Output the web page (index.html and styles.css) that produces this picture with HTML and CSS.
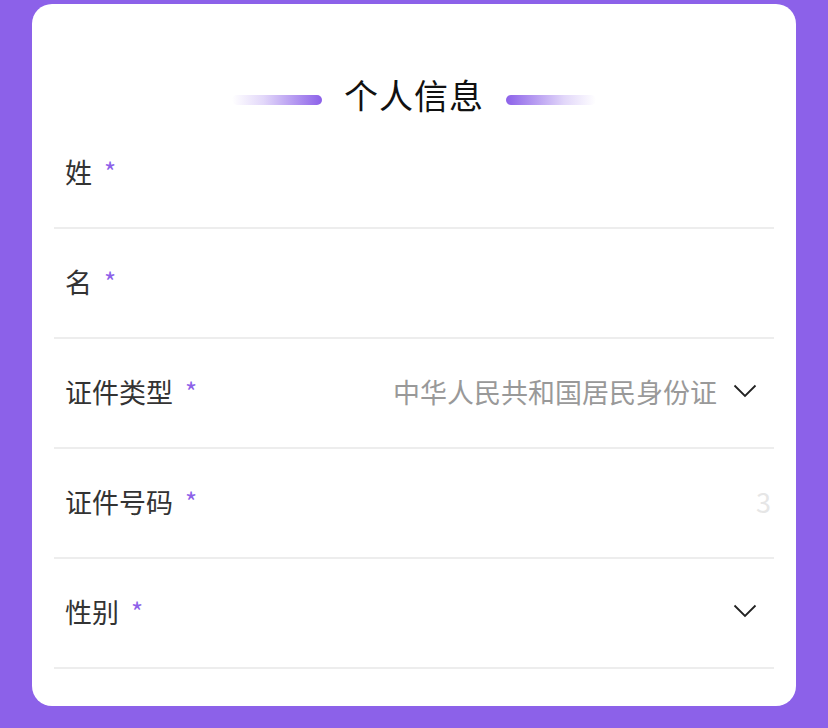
FILE: index.html
```html
<!DOCTYPE html>
<html lang="zh-CN">
<head>
  <meta charset="UTF-8" />
  <meta name="viewport" content="width=device-width, initial-scale=1.0"/>
  <title>个人信息</title>
  <link rel="stylesheet" href="styles.css">
</head>
<body>
  <div class="card">
    <!-- Section title -->
    <div class="title">
      <span class="line line-left"></span>
      <h2>个人信息</h2>
      <span class="line line-right"></span>
    </div>

    <div class="row">
      <span class="label">姓</span><span class="req">*</span>
    </div>

    <div class="row">
      <span class="label">名</span><span class="req">*</span>
    </div>

    <div class="row">
      <span class="label">证件类型</span><span class="req">*</span>
      <span class="value">中华人民共和国居民身份证</span>
      <svg class="arrow" width="24" height="14" viewBox="0 0 24 14">
        <polyline points="1.5,1.5 12,12 22.5,1.5" fill="none" stroke="#222" stroke-width="1.8"/>
      </svg>
    </div>

    <div class="row">
      <span class="label">证件号码</span><span class="req">*</span>
      <span class="value ghost">3</span>
    </div>

    <div class="row">
      <span class="label">性别</span><span class="req">*</span>
      <span class="value"></span>
      <svg class="arrow" width="24" height="14" viewBox="0 0 24 14">
        <polyline points="1.5,1.5 12,12 22.5,1.5" fill="none" stroke="#222" stroke-width="1.8"/>
      </svg>
    </div>
  </div>
</body>
</html>
```

FILE: styles.css
```css
body {
  margin: 0;
  height: 728px;
  background: #8c61e9;
  font-family: "Noto Sans CJK SC", "Noto Sans", sans-serif;
  padding: 4px 32px 0;
  box-sizing: border-box;
}

.card {
  background: #fff;
  border-radius: 20px;
  height: 702px;
  padding: 0 22px;
  box-sizing: border-box;
  overflow: hidden;
}

.title {
  display: flex;
  justify-content: center;
  align-items: center;
  gap: 22px;
  padding-top: 70px;
  height: 42px;
  margin-bottom: 3px;
}

.title h2 {
  margin: 0;
  font-size: 34px;
  font-weight: 400;
  line-height: 42px;
  color: #111;
  letter-spacing: 1px;
}

.line {
  width: 90px;
  height: 10px;
  border-radius: 5px;
  position: relative;
  top: 5px;
}

.line-left {
  background: linear-gradient(to right, rgba(140, 97, 233, 0) 0%, rgba(140, 97, 233, 0.25) 35%, #8c61e9 100%);
}

.line-right {
  background: linear-gradient(to left, rgba(140, 97, 233, 0) 0%, rgba(140, 97, 233, 0.25) 35%, #8c61e9 100%);
}

.row {
  display: flex;
  align-items: center;
  height: 104px;
  padding: 0 17px 4px 11px;
  border-bottom: 2px solid #ededed;
}

.label {
  font-size: 27px;
  color: #333;
}

.req {
  font-size: 26px;
  color: #8c61e9;
  margin-left: 12px;
  position: relative;
  top: -1px;
}

.value {
  margin-left: auto;
  font-size: 27px;
  color: #999;
}

.ghost {
  color: #e6e6e6;
  margin-right: -14px;
}

.arrow {
  margin-left: 16px;
}
```
